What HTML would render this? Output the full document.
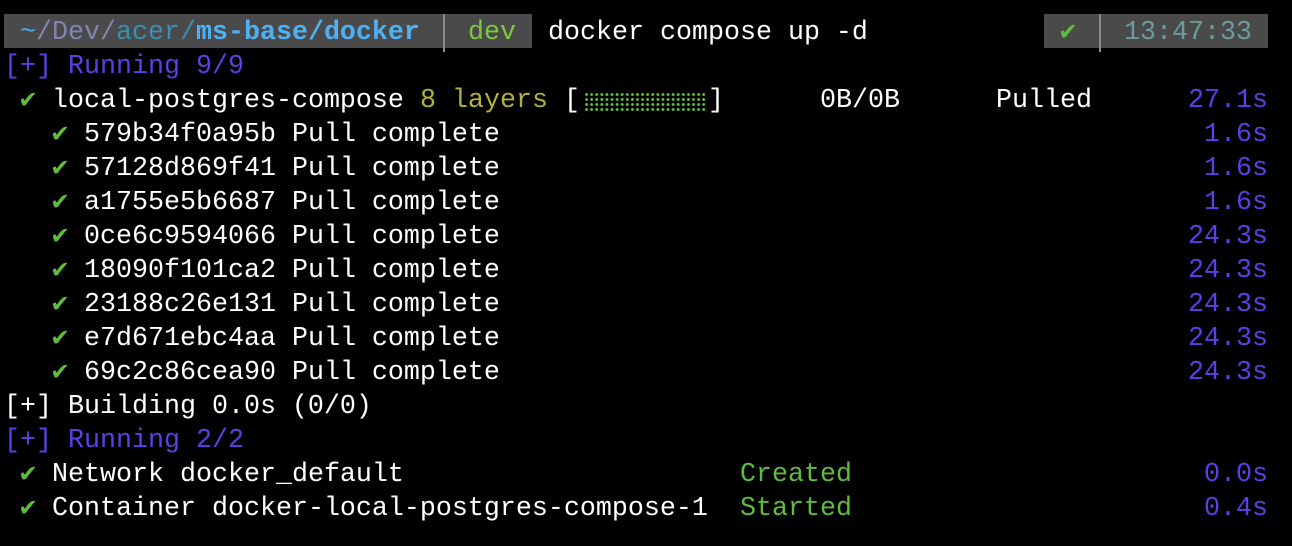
<!DOCTYPE html>
<html><head><meta charset="utf-8"><style>
html,body{margin:0;padding:0;background:#000;width:1292px;height:546px;overflow:hidden;position:relative}
.r{position:absolute;left:0;width:1292px;height:34px;font-family:"Liberation Mono","DejaVu Sans Mono",monospace;font-size:26.67px;line-height:34px;color:#fff;white-space:pre}
.r span{position:absolute;top:0}
.rt{right:24px}
.bar{position:absolute;background:#4a4a4a;top:14px;height:34px}
.sep{position:absolute;background:#8a8a8a;width:2px;top:14px;height:38px}
.p{color:#5b40e6}.g{color:#5fbd3e}.y{color:#b3b23a}.b{color:#4fb0f4;font-weight:bold}
.d{color:#8482b0}.a{color:#3b8fb3}.tl{color:#4aa8ef}.dv{color:#7bc83c}.tm{color:#6e9c9c}
.br{position:absolute;left:584px;top:92px;width:122px;height:20px;background-image:radial-gradient(circle,#5fbd3e 1.3px,transparent 1.6px);background-size:5.1px 5px}
</style></head><body>
<div class="bar" style="left:4px;width:528px"></div>
<div class="sep" style="left:443px"></div>
<div class="bar" style="left:1044px;width:224px"></div>
<div class="sep" style="left:1099px"></div>
<div class="r" style="top:16px"><span style="left:20px"><span style="position:static" class="tl">~</span><span style="position:static" class="d">/Dev/</span><span style="position:static" class="a">acer/</span><span style="position:static" class="b">ms-base/docker</span></span><span class="dv" style="left:468px">dev</span><span style="left:548px">docker compose up -d</span><span class="g" style="left:1060px">✔</span><span class="tm" style="left:1124px">13:47:33</span></div>
<div class="r" style="top:50px"><span class="p" style="left:4px">[+] Running 9/9</span></div>
<div class="r" style="top:84px"><span class="g" style="left:20px">✔</span><span style="left:52px">local-postgres-compose</span><span class="y" style="left:420px">8 layers</span><span style="left:564px">[</span><span style="left:708px">]</span><span style="left:820px">0B/0B</span><span style="left:996px">Pulled</span><span class="p rt">27.1s</span></div>
<div class="br"></div>
<div class="r" style="top:118px"><span class="g" style="left:52px">✔</span><span style="left:84px">579b34f0a95b Pull complete</span><span class="p rt">1.6s</span></div>
<div class="r" style="top:152px"><span class="g" style="left:52px">✔</span><span style="left:84px">57128d869f41 Pull complete</span><span class="p rt">1.6s</span></div>
<div class="r" style="top:186px"><span class="g" style="left:52px">✔</span><span style="left:84px">a1755e5b6687 Pull complete</span><span class="p rt">1.6s</span></div>
<div class="r" style="top:220px"><span class="g" style="left:52px">✔</span><span style="left:84px">0ce6c9594066 Pull complete</span><span class="p rt">24.3s</span></div>
<div class="r" style="top:254px"><span class="g" style="left:52px">✔</span><span style="left:84px">18090f101ca2 Pull complete</span><span class="p rt">24.3s</span></div>
<div class="r" style="top:288px"><span class="g" style="left:52px">✔</span><span style="left:84px">23188c26e131 Pull complete</span><span class="p rt">24.3s</span></div>
<div class="r" style="top:322px"><span class="g" style="left:52px">✔</span><span style="left:84px">e7d671ebc4aa Pull complete</span><span class="p rt">24.3s</span></div>
<div class="r" style="top:356px"><span class="g" style="left:52px">✔</span><span style="left:84px">69c2c86cea90 Pull complete</span><span class="p rt">24.3s</span></div>
<div class="r" style="top:390px"><span style="left:4px">[+] Building 0.0s (0/0)</span></div>
<div class="r" style="top:424px"><span class="p" style="left:4px">[+] Running 2/2</span></div>
<div class="r" style="top:458px"><span class="g" style="left:20px">✔</span><span style="left:52px">Network docker_default</span><span class="g" style="left:740px">Created</span><span class="p rt">0.0s</span></div>
<div class="r" style="top:492px"><span class="g" style="left:20px">✔</span><span style="left:52px">Container docker-local-postgres-compose-1</span><span class="g" style="left:740px">Started</span><span class="p rt">0.4s</span></div>
</body></html>
